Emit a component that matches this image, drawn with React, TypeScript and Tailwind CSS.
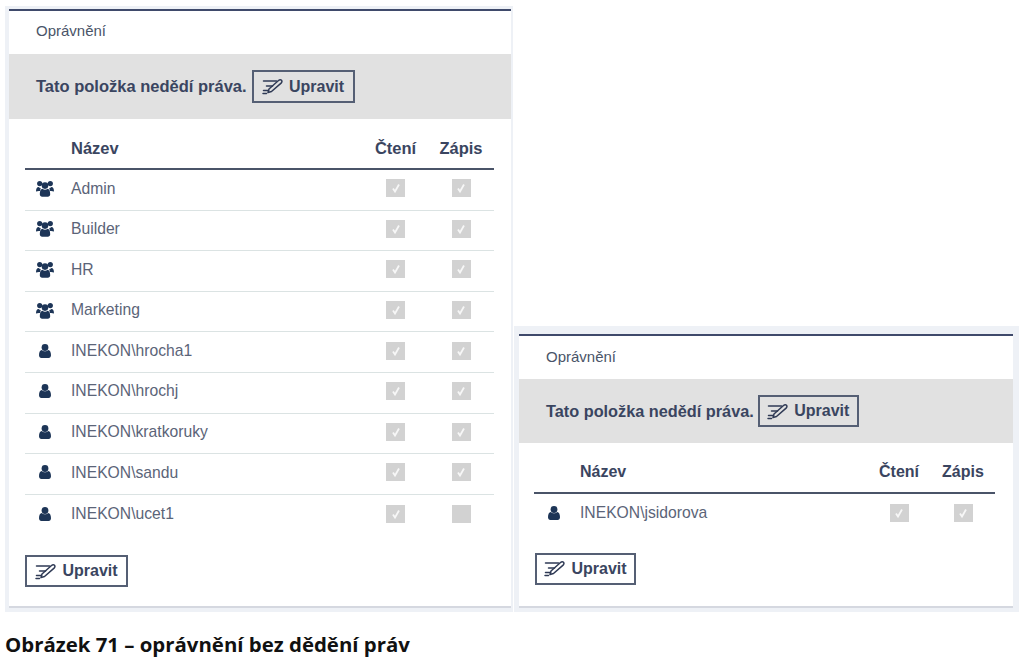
const FONT = "font-['Liberation_Sans',Arial,sans-serif]";

type Row = { name: string; group?: boolean; write?: boolean };

const leftRows: Row[] = [
  { name: "Admin", group: true, write: true },
  { name: "Builder", group: true, write: true },
  { name: "HR", group: true, write: true },
  { name: "Marketing", group: true, write: true },
  { name: "INEKON\\hrocha1", write: true },
  { name: "INEKON\\hrochj", write: true },
  { name: "INEKON\\kratkoruky", write: true },
  { name: "INEKON\\sandu", write: true },
  { name: "INEKON\\ucet1", write: false },
];

function EditIcon() {
  return (
    <svg width="22" height="17" viewBox="0 0 22 17" fill="none" stroke="#2f3a55" strokeWidth="1.5" strokeLinecap="round" strokeLinejoin="round">
      <path d="M1.5 3h13" />
      <path d="M4.5 8h6" />
      <path d="M1.5 12.5h5" />
      <path d="M1 15.5h3.5" />
      <path d="M6 14.5l1-3.5L16.5 2.5c.9-.8 2.3-.9 3-.2.7.7.5 1.9-.4 2.8L9.5 13.5z" />
    </svg>
  );
}

function GroupIcon() {
  return (
    <svg width="18" height="17" viewBox="0 0 18 17" fill="currentColor">
      <circle cx="3.7" cy="3.6" r="2.6" />
      <circle cx="14.3" cy="3.6" r="2.6" />
      <circle cx="9" cy="5.6" r="3.3" />
      <path d="M0 11.5C0 8.8.8 7 2.6 7c.5.6 1.3.9 2.2.9-.3.8-.5 1.6-.6 3.1H3c-1.2 0-2.2.2-3 .5z" />
      <path d="M18 11.5c0-2.7-.8-4.5-2.6-4.5-.5.6-1.3.9-2.2.9.3.8.5 1.6.6 3.1H15c1.2 0 2.2.2 3 .5z" />
      <path d="M3.8 14.3c0-3.3 1-5.6 2.7-5.6.7.7 1.5 1 2.5 1s1.8-.3 2.5-1c1.7 0 2.7 2.3 2.7 5.6 0 1.5-1 2.5-2.3 2.500H6.1c-1.3 0-2.3-1-2.3-2.5z" />
    </svg>
  );
}

function UserIcon() {
  return (
    <svg width="12" height="14" viewBox="0 0 12 14" fill="currentColor">
      <circle cx="6" cy="3.5" r="3.4" />
      <path d="M0 11.3C0 8.3 1 6 2.8 6c.8.8 1.900 1.300 3.200 1.300S8.400 6.800 9.200 6C11 6 12 8.300 12 11.300c0 1.600-1 2.700-2.400 2.700H2.400C1 14 0 12.900 0 11.300z" />
    </svg>
  );
}

function EditButton({ className }: { className: string }) {
  return (
    <button className={`flex items-center justify-center gap-[5px] border-2 border-[#555f74] text-[16px] font-bold text-[#3a4560] ${className}`}>
      <EditIcon />
      Upravit
    </button>
  );
}

function Check({ on }: { on: boolean }) {
  return (
    <span className="flex h-[18px] w-[19px] items-center justify-center bg-[#d2d2d2]">
      {on && (
        <svg width="12" height="12" viewBox="0 0 12 12" fill="none" stroke="#f7f7f7" strokeWidth="1.8">
          <path d="M3 6.5l2 3 4-7" />
        </svg>
      )}
    </span>
  );
}

function PermissionRow({ row, readCol, writeCol, last }: { row: Row; readCol: string; writeCol: string; last: boolean }) {
  return (
    <div className={`flex h-[40.6px] items-center pb-[3px] ${last ? "" : "border-b border-[#dbe3e3]"}`}>
      <span className="flex w-[46px] items-center justify-center pr-[7px] text-[#1d3557]">
        {row.group ? <GroupIcon /> : <UserIcon />}
      </span>
      <span className="flex-1 text-[15.7px] text-[#5b6478]">{row.name}</span>
      <span className={`flex justify-center ${readCol}`}>
        <Check on />
      </span>
      <span className={`flex justify-center ${writeCol}`}>
        <Check on={row.write !== false} />
      </span>
    </div>
  );
}

export default function App() {
  return (
    <div className={`h-[661px] w-[1024px] overflow-hidden bg-white ${FONT}`}>
      <div className="flex h-[612px] items-end pl-[5px]">
        <section className="h-[606px] w-[508px] bg-[#eef1f6] pb-[4px] pl-[4px] pr-[2px] pt-[3px]">
          <div className="h-full border-t-2 border-b-2 border-t-[#3f4a6b] border-b-[#d5d8e0] bg-white">
            <div className="flex h-[43px] items-center pb-[3px] pl-[27px] text-[15px] text-[#4a5468]">Oprávnění</div>
            <div className="flex h-[65px] items-center gap-[5px] bg-[#e1e1e1] pl-[27px] text-[16.5px] font-bold text-[#3a4560]">
              Tato položka nedědí práva.
              <EditButton className="h-[33px] w-[103px]" />
            </div>
            <div className="pl-[16px] pr-[17px]">
              <div className="flex h-[51px] items-center border-b-2 border-[#4a5468] pt-[9px] text-[16.5px] font-bold text-[#3a4560]">
                <span className="w-[46px]" />
                <span className="flex-1">Název</span>
                <span className="w-[65px] text-center">Čtení</span>
                <span className="w-[66px] text-center">Zápis</span>
              </div>
              {leftRows.map((row, i) => (
                <PermissionRow key={row.name} row={row} readCol="w-[65px]" writeCol="w-[66px]" last={i === leftRows.length - 1} />
              ))}
            </div>
            <EditButton className="ml-[16px] mt-[20px] h-[32px] w-[103px]" />
          </div>
        </section>
        <section className="ml-[1px] h-[286px] w-[505px] bg-[#eef1f6] pb-[4px] pl-[5px] pr-[6px] pt-[8px]">
          <div className="h-full border-t-2 border-b-2 border-t-[#3f4a6b] border-b-[#d5d8e0] bg-white">
            <div className="flex h-[43px] items-center pl-[27px] text-[15px] text-[#4a5468]">Oprávnění</div>
            <div className="flex h-[64px] items-center gap-[4px] bg-[#e1e1e1] pl-[27px] text-[16.3px] font-bold text-[#3a4560]">
              Tato položka nedědí práva.
              <EditButton className="h-[32px] w-[101px]" />
            </div>
            <div className="pl-[15px] pr-[18px]">
              <div className="flex h-[51px] items-center border-b-2 border-[#4a5468] pt-[9px] text-[16px] font-bold text-[#3a4560]">
                <span className="w-[46px]" />
                <span className="flex-1">Název</span>
                <span className="w-[64px] text-center">Čtení</span>
                <span className="w-[64px] text-center">Zápis</span>
              </div>
              <PermissionRow row={{ name: "INEKON\\jsidorova", write: true }} readCol="w-[64px]" writeCol="w-[64px]" last />
            </div>
            <EditButton className="ml-[16px] mt-[18px] h-[32px] w-[101px]" />
          </div>
        </section>
      </div>
      <div className="pl-[5px] pt-[19px] font-['Open_Sans',sans-serif] text-[20.4px] font-bold leading-[26px] text-[#111]">
        Obrázek 71 – oprávnění bez dědění práv
      </div>
    </div>
  );
}
